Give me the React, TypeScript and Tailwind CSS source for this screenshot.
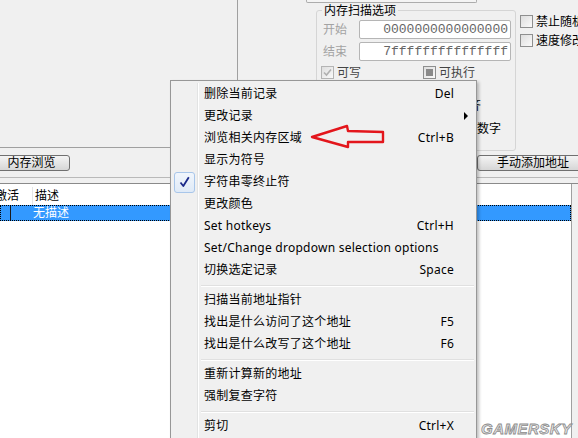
import React from 'react';

type MenuEntry =
  | { kind: 'item'; label: string; shortcut?: string; checked?: boolean; submenu?: boolean }
  | { kind: 'sep' };

const menuEntries: MenuEntry[] = [
  { kind: 'item', label: '删除当前记录', shortcut: 'Del' },
  { kind: 'item', label: '更改记录', submenu: true },
  { kind: 'item', label: '浏览相关内存区域', shortcut: 'Ctrl+B' },
  { kind: 'item', label: '显示为符号' },
  { kind: 'item', label: '字符串零终止符', checked: true },
  { kind: 'item', label: '更改颜色' },
  { kind: 'item', label: 'Set hotkeys', shortcut: 'Ctrl+H' },
  { kind: 'item', label: 'Set/Change dropdown selection options' },
  { kind: 'item', label: '切换选定记录', shortcut: 'Space' },
  { kind: 'sep' },
  { kind: 'item', label: '扫描当前地址指针' },
  { kind: 'item', label: '找出是什么访问了这个地址', shortcut: 'F5' },
  { kind: 'item', label: '找出是什么改写了这个地址', shortcut: 'F6' },
  { kind: 'sep' },
  { kind: 'item', label: '重新计算新的地址' },
  { kind: 'item', label: '强制复查字符' },
  { kind: 'sep' },
  { kind: 'item', label: '剪切', shortcut: 'Ctrl+X' },
  { kind: 'item', label: '复制', shortcut: 'Ctrl+C' },
];

const CheckBox = ({ state, disabled }: { state: 'off' | 'on' | 'mixed'; disabled?: boolean }) => (
  <div
    className={`w-[13px] h-[13px] shrink-0 border flex items-center justify-center bg-linear-to-br from-[#dedede] to-[#fafafa] ${
      disabled ? 'border-[#b4b4b4]' : 'border-[#8e8f8f]'
    }`}
  >
    {state === 'mixed' && <div className="w-[7px] h-[7px] bg-[#8a8a8a]" />}
    {state === 'on' && (
      <svg width="9" height="9" viewBox="0 0 9 9">
        <path d="M1 4.5 L3.5 7 L8 1.5" fill="none" stroke="#b0b0b0" strokeWidth="1.6" />
      </svg>
    )}
  </div>
);

const Gutter = ({ children }: { children?: React.ReactNode }) => (
  <div className="w-[27px] shrink-0 border-r border-[#e2e3e3] flex items-center justify-center">{children}</div>
);

const ContextMenu = () => (
  <div className="absolute left-[170px] top-[80px] w-[307px] h-[372px] pt-[2px] bg-[#f0f0f0] border border-[#979797] shadow-[2px_2px_3px_rgba(0,0,0,0.25)] text-black tracking-[0.25px]">
    {menuEntries.map((e, i) =>
      e.kind === 'sep' ? (
        <div key={i} className="flex h-[8px]">
          <Gutter />
          <div className="flex-1 border-l border-white pl-[2px] pr-[2px] pt-[4px]">
            <div className="h-px bg-[#e0e0e0]" />
            <div className="h-px bg-white" />
          </div>
        </div>
      ) : (
        <div key={i} className="flex h-[22px]">
          <Gutter>
            {e.checked && (
              <div className="w-[21px] h-[21px] rounded-[3px] border border-[#a8c6ea] bg-linear-to-b from-[#f1f6fc] to-[#dfeaf7] flex items-center justify-center">
                <svg width="11" height="12" viewBox="0 0 11 12">
                  <path d="M1.5 6.5 L4.3 10 L9.8 1.2" fill="none" stroke="#1b2a8a" strokeWidth="1.8" strokeLinejoin="round" />
                </svg>
              </div>
            )}
          </Gutter>
          <div className="flex-1 flex items-center border-l border-white pl-[5px]">
            <span className="flex-1 whitespace-nowrap">{e.label}</span>
            <span className="pr-[8px]">{e.shortcut}</span>
            <div className="w-[14px] shrink-0 flex items-center">
              {e.submenu && (
                <div className="ml-[2px] w-0 h-0 border-y-[4px] border-y-transparent border-l-[4px] border-l-black" />
              )}
            </div>
          </div>
        </div>
      )
    )}
  </div>
);

const WinButton = ({ label, className }: { label: string; className: string }) => (
  <div
    className={`h-[16px] rounded-[3px] border border-[#707070] bg-linear-to-b from-[#f4f4f4] to-[#d6d6d6] flex items-center justify-center shrink-0 ${className}`}
  >
    {label}
  </div>
);

export default function App() {
  return (
    <div className="relative w-[578px] h-[438px] overflow-hidden bg-[#f0f0f0] text-[12px] leading-[16px] text-black [font-family:'Noto_Sans','Noto_Sans_CJK_SC',sans-serif]">
      {/* top area */}
      <div className="flex h-[155px]">
        <div className="w-[238px] h-[148px] shrink-0 border-r border-b border-[#a0a0a0]" />
        <div className="w-[278px] shrink-0">
          <div className="ml-[68px] w-[171px] h-[3px] border border-t-0 border-[#acacac] rounded-b-[2px] bg-[#f4f4f4]" />
          <div className="relative mt-[7px] ml-[78px] w-[200px] h-[141px] border border-[#d5d5d5] rounded-[3px] pt-[9px] pl-[6px]">
            <div className="absolute -top-[8px] left-[5px] px-[2px] bg-[#f0f0f0]">内存扫描选项</div>
            <div className="flex items-center h-[19px]">
              <span className="w-[36px] text-[#a3a3a3]">开始</span>
              <div className="w-[152px] h-[19px] bg-white border border-[#b5b5b5] rounded-[2px] flex items-center justify-end pr-[2px] text-[13px] text-[#666] [font-family:'Liberation_Mono',monospace]">
                0000000000000000
              </div>
            </div>
            <div className="flex items-center h-[19px] mt-[3px]">
              <span className="w-[36px] text-[#a3a3a3]">结束</span>
              <div className="w-[152px] h-[19px] bg-white border border-[#b5b5b5] rounded-[2px] flex items-center justify-end pr-[2px] text-[13px] text-[#666] [font-family:'Liberation_Mono',monospace]">
                7fffffffffffffff
              </div>
            </div>
            <div className="flex items-center h-[13px] mt-[5px] -ml-[2px] text-[#444]">
              <div className="w-[102px] flex items-center gap-[3px]">
                <CheckBox state="on" disabled />
                <span>可写</span>
              </div>
              <div className="flex items-center gap-[3px]">
                <CheckBox state="mixed" />
                <span>可执行</span>
              </div>
            </div>
            <div className="mt-[19px] ml-[134px] whitespace-nowrap">对齐</div>
            <div className="mt-[7px] ml-[106px] whitespace-nowrap">十六进制数字</div>
          </div>
        </div>
        <div className="pl-[4px] pt-[15px] flex flex-col gap-[6px] whitespace-nowrap">
          <div className="flex items-center gap-[3px] h-[13px]">
            <CheckBox state="off" />
            <span>禁止随机化</span>
          </div>
          <div className="flex items-center gap-[3px] h-[13px]">
            <CheckBox state="off" />
            <span>速度修改</span>
          </div>
        </div>
      </div>

      {/* buttons */}
      <div className="flex h-[16px]">
        <WinButton label="内存浏览" className="w-[77px] -ml-[7px]" />
        <div className="w-[407px] shrink-0" />
        <WinButton label="手动添加地址" className="w-[112px]" />
      </div>

      <div className="mt-[6px] h-px bg-[#b9b9b9]" />
      <div className="mt-[5px] h-px bg-[#8a8a8a]" />

      {/* address list */}
      <div className="flex h-[260px]">
        <div className="w-[572px] shrink-0 bg-white border-r border-[#a0a0a0]">
          <div className="flex h-[21px] items-center pt-[3px]">
            <div className="w-[33px] shrink-0 border-r border-[#e5e5e5] h-[18px] flex items-center whitespace-nowrap overflow-hidden">
              <span className="-ml-[5px]">激活</span>
            </div>
            <span className="pl-[2px]">描述</span>
          </div>
          <div className="flex items-center h-[16px] w-[571px] bg-[#3399ff] border border-dotted border-black">
            <div className="w-[10px] h-[14px] border-r border-[#1a1a1a]" />
            <span className="pl-[22px] text-white">无描述</span>
          </div>
        </div>
      </div>

      <ContextMenu />

      {/* red arrow annotation */}
      <svg className="absolute left-0 top-0 pointer-events-none" width="578" height="438" viewBox="0 0 578 438">
        <path
          d="M383 132 L348 131 L347 126 L312 137 L348 147 L348 142 L383 142 Z"
          fill="none"
          stroke="#e3161c"
          strokeWidth="2.4"
          strokeLinejoin="round"
        />
      </svg>

      <div className="absolute left-[481px] top-[421px] italic font-bold text-[15px] leading-[16px] tracking-[0.5px] text-[#e6e6e6] [font-family:'Liberation_Sans',sans-serif] [-webkit-text-stroke:0.8px_#8c8c8c]">
        GAMERSKY
      </div>
    </div>
  );
}
